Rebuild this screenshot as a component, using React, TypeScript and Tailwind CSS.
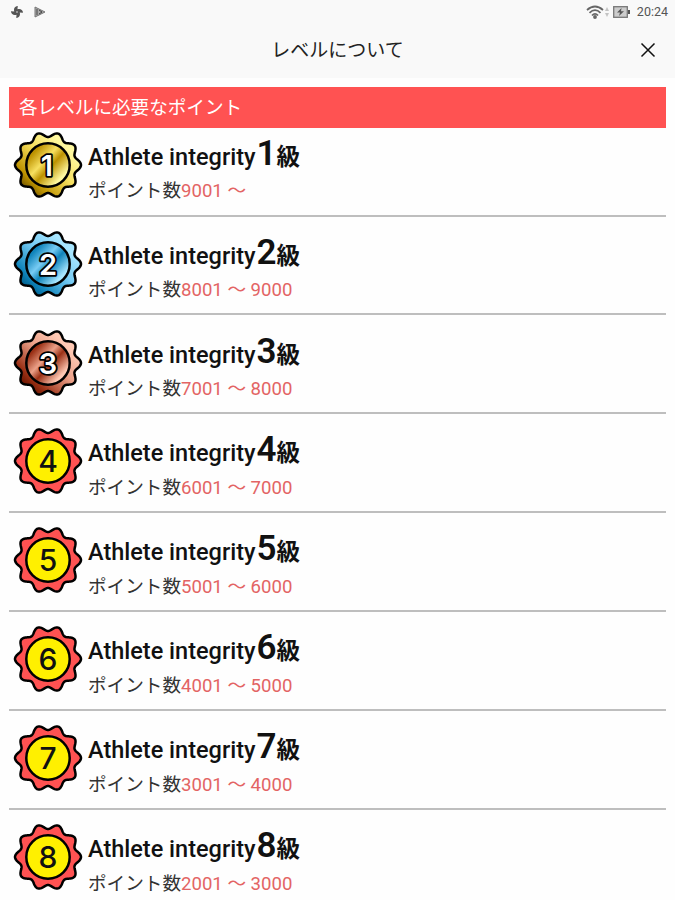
import { FaFan } from 'react-icons/fa';

interface Level {
  rank: number;
  range: string;
  stops?: string[];
}

const levels: Level[] = [
  { rank: 1, range: '9001 ～', stops: ['#fff9a0', '#f7e060', '#bd9200', '#7a5c00'] },
  { rank: 2, range: '8001 ～ 9000', stops: ['#a8e6ff', '#78ccf4', '#0f83ba', '#005f8c'] },
  { rank: 3, range: '7001 ～ 8000', stops: ['#ffc9b4', '#eba088', '#9a3015', '#6b1600'] },
  { rank: 4, range: '6001 ～ 7000' },
  { rank: 5, range: '5001 ～ 6000' },
  { rank: 6, range: '4001 ～ 5000' },
  { rank: 7, range: '3001 ～ 4000' },
  { rank: 8, range: '2001 ～ 3000' },
];

const LOBES = 10;

// wavy outline of the medal, one crest per lobe
const outline = Array.from({ length: 240 }, (_, i) => {
  const a = (i / 240) * Math.PI * 2;
  const r = 30.5 + 2.5 * Math.cos(a * LOBES);
  return `${(35 + r * Math.cos(a)).toFixed(2)},${(35 + r * Math.sin(a)).toFixed(2)}`;
}).join(' ');

function Badge({ rank, stops }: { rank: number; stops?: string[] }) {
  const outer = `outer-${rank}`;
  const inner = `inner-${rank}`;
  return (
    <svg viewBox="0 0 70 70" className="h-[70px] w-[70px] shrink-0">
      {stops && (
        <defs>
          <linearGradient id={outer} x1="0.9" y1="0.2" x2="0.2" y2="0.9">
            <stop offset="0.1" stopColor={stops[0]} />
            <stop offset="0.45" stopColor={stops[1]} />
            <stop offset="0.85" stopColor={stops[2]} />
            <stop offset="1" stopColor={stops[3]} />
          </linearGradient>
          <linearGradient id={inner} x1="0.1" y1="0.1" x2="0.9" y2="0.85">
            <stop offset="0" stopColor={stops[2]} />
            <stop offset="0.12" stopColor={stops[2]} />
            <stop offset="0.4" stopColor={stops[1]} />
            <stop offset="0.58" stopColor={stops[2]} />
            <stop offset="0.9" stopColor={stops[0]} />
          </linearGradient>
        </defs>
      )}
      <polygon points={outline} fill={stops ? `url(#${outer})` : '#ff5252'} stroke="#000" strokeWidth="2.5" strokeLinejoin="round" />
      <circle cx="35" cy="35" r="21.7" fill={stops ? `url(#${inner})` : '#fff000'} stroke="#000" strokeWidth="2.5" />
      <text
        x={rank === 1 ? 34 : 35}
        y="46"
        textAnchor="middle"
        fontSize={stops ? 29 : 30}
        fontWeight={stops ? 600 : 500}
        fill={stops ? '#fff' : '#111'}
        stroke={stops ? '#000' : 'none'}
        strokeWidth="3.6"
        strokeLinejoin="round"
        paintOrder="stroke"
        className="font-['Inter',sans-serif]"
      >
        {rank}
      </text>
    </svg>
  );
}

function StatusBar() {
  return (
    <div className="flex h-6 items-center justify-between pr-[7px] pl-[11px] text-[#555]">
      <div className="flex items-center gap-[11px]">
        <FaFan size={12} />
        <svg viewBox="0 0 12 12" className="h-3 w-3">
          <path d="M1 1 L11 6 L1 11 Z" fill="#aaa" stroke="#777" />
          <path d="M3 3v6M5 4l3 2-3 2" fill="none" stroke="#444" />
        </svg>
      </div>
      <div className="flex items-center">
        <svg viewBox="0 0 18 14" className="h-[14px] w-[18px]" fill="none" stroke="#666" strokeWidth="1.8">
          <path d="M1 5Q9 -2 17 5M3.5 7.8Q9 2.5 14.5 7.8M6 10.5Q9 7.2 12 10.5" />
          <circle cx="9" cy="12" r="1" fill="#555" />
        </svg>
        <svg viewBox="0 0 4 12" className="ml-px h-3 w-1" fill="#c4c4c4">
          <path d="M0 5l2-4 2 4zM0 7l2 4 2-4z" />
        </svg>
        <svg viewBox="0 0 17 12" className="ml-[4px] h-3 w-[17px]">
          <rect x="0.7" y="0.7" width="13.6" height="10.6" fill="#ccc" stroke="#777" strokeWidth="1.3" />
          <path d="M15 4h2v4h-2z" fill="#555" />
          <path d="M8.5 2L4 6.6h3L6 10l5-4.8H8z" fill="#555" />
        </svg>
        <span className="ml-[7px] font-['Roboto',sans-serif] text-[12.5px] leading-6">20:24</span>
      </div>
    </div>
  );
}

function LevelRow({ rank, range, stops }: Level) {
  return (
    <li className="flex h-[98.9px] border-b-2 border-[#bebebe] pt-[12.2px] pl-[4px]">
      <Badge rank={rank} stops={stops} />
      <div className="mt-[4px] ml-[5px]">
        <div className="flex h-10 items-baseline text-[23.5px] leading-10 font-medium whitespace-nowrap text-[#111]">
          <span className="w-[168.5px]">Athlete integrity</span>
          <span className="w-5 text-[35px] font-semibold">{rank}</span>
          <span className="text-[23.5px] font-bold">級</span>
        </div>
        <p className="mt-[5.5px] text-[18.6px] leading-6 whitespace-nowrap text-[#333]">
          ポイント数<span className="text-[#e36464]">{range}</span>
        </p>
      </div>
    </li>
  );
}

export default function App() {
  return (
    <div className="h-[900px] overflow-hidden bg-[#fefefe] font-['Roboto','Noto_Sans_CJK_JP',sans-serif]">
      <header className="h-[78px] bg-[#f9f9f9]">
        <StatusBar />
        <div className="grid h-[52px] grid-cols-[1fr_auto_1fr] items-center">
          <h1 className="col-start-2 mt-[3px] text-[19px] text-[#222]">レベルについて</h1>
          <button aria-label="閉じる" className="mr-[19px] justify-self-end">
            <svg viewBox="0 0 16 16" className="h-4 w-4" stroke="#111" strokeWidth="1.5">
              <path d="M1.5 1.5l13 13M14.5 1.5l-13 13" />
            </svg>
          </button>
        </div>
      </header>
      <main className="px-[9px] pt-[9px]">
        <h2 className="flex h-[41px] items-center bg-[#ff5252] pt-0.5 pl-[10px] text-[18.6px] text-white">各レベルに必要なポイント</h2>
        <ul className="-mt-[10.4px]">
          {levels.map((level) => (
            <LevelRow key={level.rank} {...level} />
          ))}
        </ul>
      </main>
    </div>
  );
}
